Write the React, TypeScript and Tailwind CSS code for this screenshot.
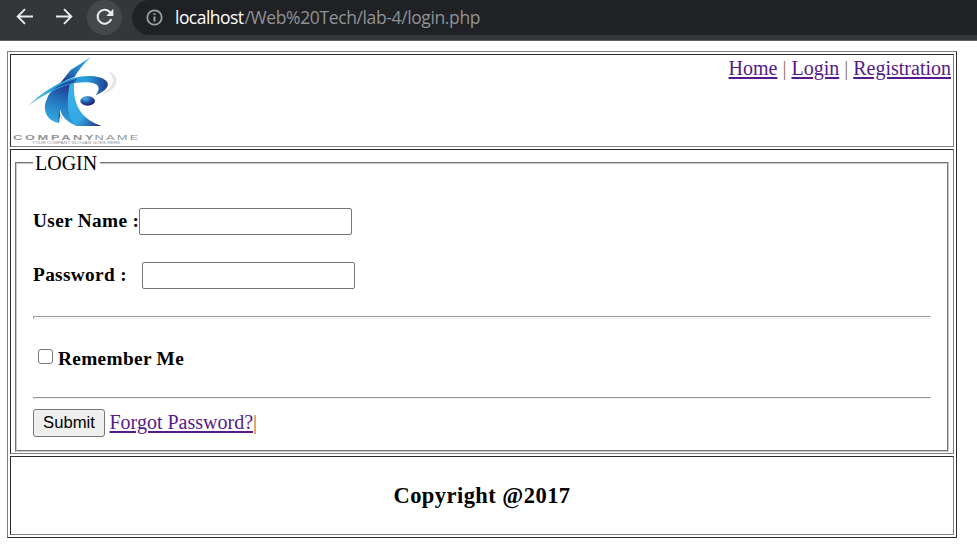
import type { ReactNode } from "react";

function BrowserBar() {
  return (
    <header className="flex h-[41px] border-b border-[#5f6064] bg-[#35363a]">
      <div className="flex h-[34px] w-full items-center">
        <svg className="ml-[16px] h-[18px] w-[18px] shrink-0" viewBox="0 0 18 18" fill="none" stroke="#e8eaed" strokeWidth="1.9">
          <path d="M17 8.5H1.8M9 1.2L1.7 8.5L9 15.8" />
        </svg>
        <svg className="ml-[22px] h-[18px] w-[18px] shrink-0" viewBox="0 0 18 18" fill="none" stroke="#e8eaed" strokeWidth="1.9">
          <path d="M0 8.5H15.2M8 1.2L15.3 8.5L8 15.8" />
        </svg>
        <div className="ml-[13px] flex h-[35px] w-[35px] shrink-0 items-center justify-center rounded-full bg-[#46474b]">
          <svg className="h-[18px] w-[18px]" viewBox="0 0 18 18">
            <path d="M15.2 11.2A7 7 0 1 1 13.7 3.9L15.4 5.6" fill="none" stroke="#e8eaed" strokeWidth="2.1" />
            <path d="M17.4 0.7V7.9H10.2Z" fill="#e8eaed" />
          </svg>
        </div>
        <div className="ml-[10px] flex h-[35px] min-w-0 flex-1 items-center rounded-l-full bg-[#202124]">
          <svg className="ml-[14px] h-[17px] w-[17px] shrink-0" viewBox="0 0 17 17">
            <circle cx="8.5" cy="8.5" r="7.2" fill="none" stroke="#9aa0a6" strokeWidth="1.8" />
            <path d="M8.5 7.5V12.5M8.5 4.3V6" stroke="#9aa0a6" strokeWidth="1.9" />
          </svg>
          <svg className="ml-[12px] h-[30px] w-[320px] shrink-0 font-['Open_Sans','Noto_Sans',sans-serif] text-[17.5px]">
            <text x="0" y="21.5" textLength="69" fill="#ffffff">localhost</text>
            <text x="69.5" y="21.5" textLength="236" fill="#8f9296">/Web%20Tech/lab-4/login.php</text>
          </svg>
        </div>
      </div>
    </header>
  );
}

function Logo() {
  return (
    <svg className="h-[88px] w-[126px]" viewBox="39 51 378 264">
      <defs>
        <linearGradient id="spire" x1="0" y1="1" x2="1" y2="0">
          <stop offset="0" stopColor="#202a79" />
          <stop offset=".45" stopColor="#2278bd" />
          <stop offset="1" stopColor="#39b9ec" />
        </linearGradient>
        <linearGradient id="ring">
          <stop offset="0" stopColor="#65caef" />
          <stop offset=".4" stopColor="#249cda" />
          <stop offset=".75" stopColor="#2a9bd8" />
          <stop offset="1" stopColor="#22388e" />
        </linearGradient>
        <linearGradient id="body" x1=".6" y1="0" x2=".3" y2="1">
          <stop offset="0" stopColor="#25318a" />
          <stop offset=".45" stopColor="#2475bd" />
          <stop offset="1" stopColor="#36b3ea" />
        </linearGradient>
        <linearGradient id="leg" x1="0" y1="0" x2="1" y2="1">
          <stop offset="0" stopColor="#39b5e9" />
          <stop offset=".6" stopColor="#34a8e2" />
          <stop offset="1" stopColor="#25237b" />
        </linearGradient>
        <radialGradient id="ball" cx=".35" cy=".25" r=".75">
          <stop offset="0" stopColor="#45b9ee" />
          <stop offset=".55" stopColor="#2254a7" />
          <stop offset="1" stopColor="#201f72" />
        </radialGradient>
      </defs>
      <path d="M273 51L212 90L179 131Q201 118 224 111Q239 82 273 51Z" fill="url(#spire)" />
      <path d="M322 94C362 103 362 150 302 164C346 142 348 111 322 94Z" fill="#e3e5e8" />
      <path d="M216 124C174 139 148 153 141 176C132 194 134 209 138 220C143 236 159 246 177 249Q174 229 180 209Q187 240 230 258Q196 208 214 134Z" fill="url(#body)" />
      <path d="M209 131C198 195 202 235 229 258H305C251 239 218 202 222 131Z" fill="url(#leg)" />
      <path d="M180 209Q177 230 189 239L180 226L177 249Q173 228 180 209Z" fill="#25368b" />
      <path d="M83 199C127 156 192 109 265 108C317 108 333 130 319 145Q311 156 287 166C305 142 297 126 250 127C202 128 138 158 83 199Z" fill="url(#ring)" />
      <path d="M150 153Q198 121 232 116L219 130Q183 136 150 153Z" fill="#24509f" />
      <ellipse cx="263" cy="183" rx="22" ry="14" fill="url(#ball)" />
      <g className="font-['Liberation_Sans',sans-serif]" fill="#929497">
        <g transform="translate(39 299) scale(1.6 1)">
          <text x="0" y="0" fontSize="24" fontWeight="700" textLength="151">COMPANY</text>
          <text x="153" y="0" fontSize="24" textLength="82">NAME</text>
        </g>
        <text x="96" y="312" fontSize="9" textLength="265" lengthAdjust="spacingAndGlyphs">YOUR COMPANY SLOGAN GOES HERE</text>
      </g>
    </svg>
  );
}

function Link({ children }: { children: ReactNode }) {
  return <a href="#" className="text-[#551a8b] underline decoration-2 underline-offset-2">{children}</a>;
}

const cell = "border border-t-[#2b2b2b] border-l-[#2b2b2b] border-r-[#808080] border-b-[#808080]";
const input = "h-[27px] w-[213px] shrink-0 rounded-[2px] border border-[#767676] bg-white px-1 outline-none";
const label = "text-[19.3px] tracking-[0.35px] whitespace-nowrap";

export default function App() {
  return (
    <div className="min-h-[553px] bg-white font-['Liberation_Serif',serif] text-[20px] leading-[23px] text-black">
      <BrowserBar />
      <main className="mt-[10px] ml-[7px] flex h-[487px] w-[950px] flex-col gap-[2px] border border-t-[#808080] border-r-[#2b2b2b] border-b-[#2b2b2b] border-l-[#808080] p-[2px]">
        <div className={`${cell} flex h-[93px] shrink-0 justify-between pt-[2px] pr-[2px] pl-[2px]`}>
          <Logo />
          <nav className="whitespace-pre text-[#95704f]">
            <Link>Home</Link> | <Link>Login</Link> | <Link>Registration</Link>
          </nav>
        </div>
        <div className={`${cell} h-[305px] shrink-0 px-[4px] pt-[1px]`}>
          <fieldset className="flow-root h-[301px] border-2 border-[#c9c9c9] px-[16px] [border-style:groove]">
            <legend className="h-[23px] w-[67px] px-[2px] pt-px leading-[23px]">LOGIN</legend>
            <form onSubmit={(e) => e.preventDefault()}>
              <label className="mt-[34px] flex h-[27px] items-center font-bold">
                <span className={`${label} w-[106px] shrink-0 pb-[2px]`}>User Name :</span>
                <input className={input} />
              </label>
              <label className="mt-[27px] flex h-[27px] items-center font-bold">
                <span className={`${label} w-[109px] shrink-0 pb-[2px]`}>Password :</span>
                <input type="password" className={input} />
              </label>
              <div className="mt-[27px] h-[3px] border border-t-[#999] border-r-[#eee] border-b-[#eee] border-l-[#999]" />
              <label className="mt-[28px] flex h-[24px] font-bold">
                <input type="checkbox" className="mt-[2px] ml-[5px] h-[15px] w-[15px] shrink-0 appearance-none rounded-[3px] border border-[#767676] bg-white" />
                <span className={`${label} ml-[5px]`}>Remember Me</span>
              </label>
              <div className="mt-[26px] h-[2px] border border-t-[#999] border-r-[#eee] border-b-[#eee] border-l-[#999]" />
              <div className="mt-[10px] flex h-[28px] items-center">
                <button className="h-[28px] w-[72px] rounded-[3px] border border-[#767676] bg-[#efefef] font-['Liberation_Sans',sans-serif] text-[16.67px] leading-[20px]">Submit</button>
                <span className="ml-[4.5px] pb-[2px] whitespace-nowrap text-[#95704f]"><Link>Forgot Password?</Link>|</span>
              </div>
            </form>
          </fieldset>
        </div>
        <footer className={`${cell} flex h-[79px] shrink-0 items-center justify-center`}>
          <h3 className="text-[22.5px] leading-[27px] font-bold tracking-[0.45px]">Copyright @2017</h3>
        </footer>
      </main>
    </div>
  );
}
